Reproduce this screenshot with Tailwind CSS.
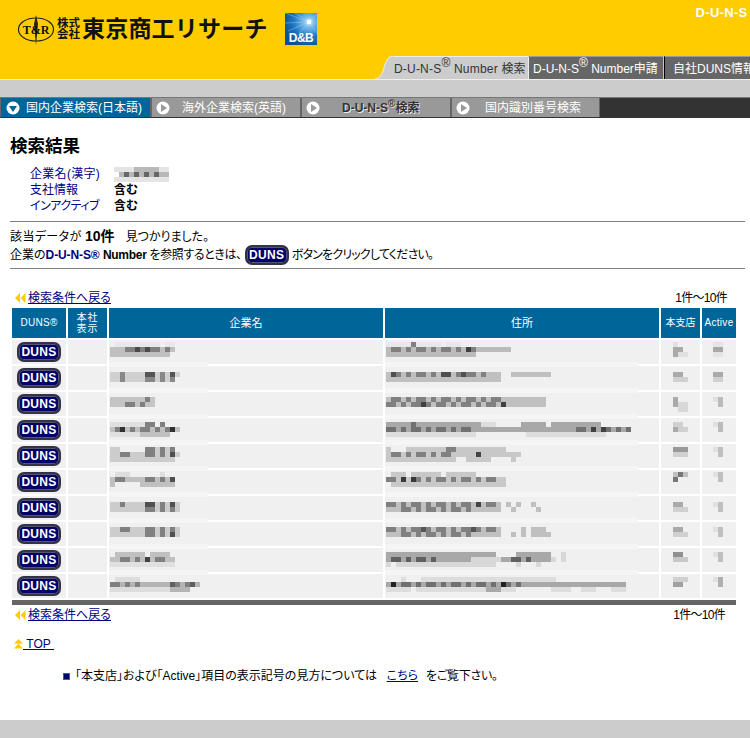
<!DOCTYPE html>
<html lang="ja">
<head>
<meta charset="utf-8">
<title>検索結果</title>
<script src="https://cdn.jsdelivr.net/npm/@tailwindcss/browser@4"></script>
</head>
<body class="bg-white">
<div class="relative w-[750px] h-[738px] overflow-hidden flex flex-col text-[12px] leading-[16px] text-black [font-feature-settings:'palt'] font-['Liberation_Sans','Noto_Sans_CJK_JP',sans-serif]">

  <!-- header -->
  <header class="h-[80px] shrink-0 bg-[#ffcc00] border-b border-[#eeeeee] flex flex-col justify-between overflow-hidden">
    <div class="flex items-start pl-[17px] pt-[13px] h-[56px] whitespace-nowrap">
      <svg width="38" height="30" viewBox="0 0 38 30" class="mt-[2px] shrink-0" fill="none">
        <path d="M19 0 L21 9 L19 30 L17 9Z" fill="#222"/>
        <ellipse cx="19" cy="14.500" rx="17.500" ry="11.500" stroke="#222" stroke-width="1.200"/>
        <text x="19" y="19" text-anchor="middle" font-family="Liberation Serif" font-weight="700" font-size="12" fill="#111">T&amp;R</text>
      </svg>
      <div class="ml-[2px] mt-[5px] w-[24px] font-bold text-[11.500px] leading-[10.500px] text-[#111]">株式<br>会社</div>
      <div class="ml-[1px] mt-[2px] font-bold text-[23px] leading-[28px] tracking-[0.200px] text-[#111] [font-feature-settings:normal]">東京商工リサーチ</div>
      <svg width="32" height="32" viewBox="0 0 32 32" class="ml-[17px] shrink-0">
        <defs><radialGradient id="db" cx="0.750" cy="0.280" r="0.800"><stop offset="0" stop-color="#ffffff"/><stop offset="0.180" stop-color="#7fc0ee"/><stop offset="0.600" stop-color="#1f78c4"/><stop offset="1" stop-color="#0a4f96"/></radialGradient></defs>
        <rect width="32" height="32" fill="url(#db)"/>
        <g stroke="#a8d8f6" stroke-width="0.600" opacity="0.700"><path d="M24 9L0 0M24 9L10 0M24 9L32 1M24 9L0 10M24 9L3 18M24 9L32 20M24 9L14 20"/></g>
        <rect x="22" y="7" width="4" height="4" fill="#fff"/>
        <text x="16" y="29" text-anchor="middle" font-family="Liberation Sans" font-weight="700" font-size="12" letter-spacing="-0.500" fill="#fff">D&amp;B</text>
      </svg>
      <div class="ml-[379px] mt-[-8px] font-bold text-[13px] text-white tracking-[0.300px]">D-U-N-S</div>
    </div>
    <div class="h-[23px] flex pl-[375px] whitespace-nowrap">
      <svg width="19" height="23" viewBox="0 0 19 23" class="shrink-0"><path d="M0 23C9 22 8 10 12 4C14 1 16 0 19 0V23Z" fill="#cccccc"/><path d="M0 23C9 22 8 10 12 4C14 1 16 0 19 0" fill="none" stroke="#eeeeee"/></svg>
      <div class="w-[134px] shrink-0 bg-[#cccccc] border-t border-[#eeeeee] text-[#333333] flex items-center pt-[2px] tracking-[0.200px]">D-U-N-S<sup class="text-[12px] leading-[0px]">®</sup>&nbsp;Number 検索</div>
      <div class="w-[135px] shrink-0 bg-[#666666] border-t border-[#999999] border-l border-l-[#eeeeee] text-white flex items-center pl-[4px] pt-[2px]">D-U-N-S<sup class="text-[12px] leading-[0px]">®</sup>&nbsp;Number申請</div>
      <div class="flex-1 ml-[1px] bg-[#666666] border-t border-[#999999] border-l border-l-black text-white flex items-center pl-[8px] pt-[2px]">自社DUNS情報</div>
    </div>
  </header>

  <div class="h-[17px] shrink-0 bg-[#cccccc]"></div>

  <!-- nav -->
  <nav class="h-[21px] shrink-0 bg-[#333333] border-t border-[#777777] flex whitespace-nowrap text-white">
    <div class="w-[150px] h-[19px] bg-[#006699] border-l border-[#666666] flex items-center pl-[5px]">
      <svg width="14" height="14" viewBox="0 0 14 14"><circle cx="7" cy="7" r="6.500" fill="#fff"/><path d="M3 5H11L7 11Z" fill="#006699"/></svg>
      <span class="ml-[6px]">国内企業検索(日本語)</span>
    </div>
    <div class="w-[150px] h-[19px] bg-[#999999] border-l-2 border-[#666666] flex items-center pl-[4px]">
      <svg width="14" height="14" viewBox="0 0 14 14"><circle cx="7" cy="7" r="6.500" fill="#fff"/><path d="M5 3V11L11 7Z" fill="#999999"/></svg>
      <span class="ml-[12px]">海外企業検索(英語)</span>
    </div>
    <div class="w-[150px] h-[19px] bg-[#999999] border-l-2 border-[#666666] flex items-center pl-[4px]">
      <svg width="14" height="14" viewBox="0 0 14 14"><circle cx="7" cy="7" r="6.500" fill="#fff"/><path d="M5 3V11L11 7Z" fill="#999999"/></svg>
      <span class="ml-[22px] font-bold text-[#333333] [text-shadow:1px_1px_0_#e8e8e8]">D-U-N-S<sup class="text-[10px] leading-[0px]">®</sup>検索</span>
    </div>
    <div class="w-[150px] h-[19px] bg-[#999999] border-l-2 border-r border-[#666666] flex items-center pl-[4px]">
      <svg width="14" height="14" viewBox="0 0 14 14"><circle cx="7" cy="7" r="6.500" fill="#fff"/><path d="M5 3V11L11 7Z" fill="#999999"/></svg>
      <span class="ml-[15px]">国内識別番号検索</span>
    </div>
  </nav>

  <main class="flex-1 flex flex-col">
    <h1 class="ml-[10px] mt-[18px] text-[17.500px] leading-[20px] font-bold">検索結果</h1>

    <dl class="ml-[30px] mt-[10px] grid grid-cols-[84px_1fr] auto-rows-[16px]">
      <dt class="text-[#000080] tracking-[0.300px]">企業名(漢字)</dt>
      <dd class="flex items-center">
        <svg width="55" height="15" fill="none" stroke-width="5"><path stroke="#e4e4e4" d="M0 2.500h55M0 12.500h55"/><path stroke="#b8b8b8" d="M5 7.500h50M20 2.500h25"/><path stroke="#666666" stroke-dasharray="5 5" d="M10 7.500h35"/></svg>
      </dd>
      <dt class="text-[#000080]">支社情報</dt><dd class="font-bold">含む</dd>
      <dt class="text-[#000080] tracking-[-0.500px]">インアクティブ</dt><dd class="font-bold">含む</dd>
    </dl>

    <hr class="ml-[10px] mr-[5px] mt-[7px] border-t border-[#808080]">
    <p class="ml-[10px] mt-[6px] whitespace-nowrap"><span class="tracking-[0.400px]">該当データが</span> <b class="text-[14px]">10件</b><span class="ml-[11px]">見つかりました。</span></p>
    <p class="ml-[10px] flex items-center h-[20px] whitespace-nowrap">企業の<b class="text-[#000080] tracking-[-0.100px]">D-U-N-S®</b>&nbsp;<b class="tracking-[-0.300px]">Number</b><span class="ml-[3px] tracking-[-0.400px]">を参照するときは、</span><span class="mx-[3px] w-[44px] h-[20px] rounded-[7px] bg-[#000066] border-2 border-[#333344] shadow-[inset_0_0_0_1px_#555577] text-white font-bold text-[12px] leading-[16px] tracking-[0.300px] text-center">DUNS</span><span class="tracking-[-0.800px]">ボタンをクリックしてください。</span></p>
    <hr class="ml-[10px] mr-[5px] mt-[3px] border-t border-[#808080]">

    <div class="mt-[21px] ml-[15px] mr-[23px] flex items-center justify-between h-[16px]">
      <a class="flex items-center text-[#000080] underline" href="#"><svg width="11" height="10" viewBox="0 0 11 10" class="mr-[2px]"><path d="M5 0V10L0 5ZM10.500 0V10L5.500 5Z" fill="#ffcc00"/></svg>検索条件へ戻る</a>
      <span class="whitespace-nowrap tracking-[-0.700px]">1件～10件</span>
    </div>

    <!-- table -->
    <div class="mt-[2px] ml-[12px] w-[724px] grid grid-cols-[54px_39px_274px_274px_39px_34px] grid-rows-[30px_repeat(10,24px)] gap-[2px]">
      <div class="bg-[#006699] text-white text-[10px] flex items-center justify-center tracking-[0.300px]">DUNS®</div>
      <div class="bg-[#006699] text-white text-[10px] leading-[11px] flex items-center justify-center text-center tracking-[1px]">本社<br>表示</div>
      <div class="bg-[#006699] text-white text-[11px] flex items-center justify-center">企業名</div>
      <div class="bg-[#006699] text-white text-[11px] flex items-center justify-center">住所</div>
      <div class="bg-[#006699] text-white text-[10px] flex items-center justify-center">本支店</div>
      <div class="bg-[#006699] text-white text-[10px] flex items-center justify-center tracking-[0.300px]">Active</div>

      <!-- row 1 -->
      <div class="bg-[#f0f0f0] flex items-center justify-center"><span class="w-[44px] h-[20px] rounded-[7px] bg-[#000066] border-2 border-[#333344] shadow-[inset_0_0_0_1px_#555577] text-white font-bold leading-[16px] tracking-[0.300px] text-center">DUNS</span></div><div class="bg-[#f0f0f0]"></div>
      <div class="bg-[#f0f0f0] pl-[1px] pt-[2px]"><svg class="block overflow-visible" width="65" height="15" fill="none" stroke-width="5"><path stroke="#e8e8e8" d="M5 2.500h45M55 2.500h10"/><path stroke="#c0c0c0" d="M0 7.500h65M0 12.500h60"/><path stroke="#808080" stroke-dasharray="10 5 5 5" d="M15 7.500h45"/><path stroke="#4a4a4a" d="M25 7.500h5M35 7.500h5"/></svg></div>
      <div class="bg-[#f0f0f0] pl-[1px] pt-[2px]"><svg class="block overflow-visible" width="125" height="15" fill="none" stroke-width="5"><path stroke="#e8e8e8" d="M0 2.500h55M60 2.500h15"/><path stroke="#bbbbbb" d="M0 7.500h125M0 12.500h90"/><path stroke="#808080" stroke-dasharray="10 5 5 5" d="M5 7.500h90M25 2.500h5"/><path stroke="#404040" d="M80 7.500h5"/></svg></div>
      <div class="bg-[#f0f0f0] pl-[12px] pt-[2px]"><svg class="block overflow-visible" width="15" height="15" fill="none" stroke-width="5"><path stroke="#e0e0e0" d="M0 2.500h5M0 12.500h15"/><path stroke="#aaaaaa" d="M0 7.500h10M0 12.500h5"/></svg></div>
      <div class="bg-[#f0f0f0] pl-[11px] pt-[2px]"><svg class="block overflow-visible" width="10" height="15" fill="none" stroke-width="5"><path stroke="#e4e4e4" d="M0 2.500h10M0 12.500h10"/><path stroke="#a8a8a8" d="M0 7.500h10"/></svg></div>

      <!-- row 2 -->
      <div class="bg-[#f0f0f0] flex items-center justify-center"><span class="w-[44px] h-[20px] rounded-[7px] bg-[#000066] border-2 border-[#333344] shadow-[inset_0_0_0_1px_#555577] text-white font-bold leading-[16px] tracking-[0.300px] text-center">DUNS</span></div><div class="bg-[#f0f0f0]"></div>
      <div class="bg-[#f0f0f0] pl-[1px] pt-[6px]"><svg class="block overflow-visible" width="70" height="10" fill="none" stroke-width="5"><path stroke="#f5f5f5" d="M-1 -7.500h99"/><path stroke="#d0d0d0" d="M0 2.500h70M0 7.500h65"/><path stroke="#888888" stroke-dasharray="10 5 5 5" d="M10 2.500h5M35 2.500h30M10 7.500h5M35 7.500h30"/><path stroke="#555555" d="M35 2.500h10M60 2.500h5"/></svg></div>
      <div class="bg-[#f0f0f0] pl-[1px] pt-[6px]"><svg class="block overflow-visible" width="165" height="10" fill="none" stroke-width="5"><path stroke="#f5f5f5" d="M-1 -7.500h253"/><path stroke="#c0c0c0" d="M0 2.500h115M125 2.500h40M0 7.500h115"/><path stroke="#808080" stroke-dasharray="10 5 5 5" d="M5 2.500h100"/><path stroke="#505050" d="M5 2.500h5M55 2.500h10M75 2.500h5"/></svg></div>
      <div class="bg-[#f0f0f0] pl-[12px] pt-[6px]"><svg class="block overflow-visible" width="15" height="10" fill="none" stroke-width="5"><path stroke="#d0d0d0" d="M0 7.500h15"/><path stroke="#aaaaaa" d="M0 2.500h10"/></svg></div>
      <div class="bg-[#f0f0f0] pl-[11px] pt-[6px]"><svg class="block overflow-visible" width="10" height="10" fill="none" stroke-width="5"><path stroke="#d0d0d0" d="M0 7.500h10"/><path stroke="#aaaaaa" d="M0 2.500h10"/></svg></div>

      <!-- row 3 -->
      <div class="bg-[#f0f0f0] flex items-center justify-center"><span class="w-[44px] h-[20px] rounded-[7px] bg-[#000066] border-2 border-[#333344] shadow-[inset_0_0_0_1px_#555577] text-white font-bold leading-[16px] tracking-[0.300px] text-center">DUNS</span></div><div class="bg-[#f0f0f0]"></div>
      <div class="bg-[#f0f0f0] pl-[1px] pt-[5px]"><svg class="block overflow-visible" width="45" height="10" fill="none" stroke-width="5"><path stroke="#f5f5f5" d="M-1 -6.500h99"/><path stroke="#c4c4c4" d="M0 2.500h45M0 7.500h45"/><path stroke="#808080" stroke-dasharray="10 5 5 5" d="M15 7.500h25M35 2.500h5"/></svg></div>
      <div class="bg-[#f0f0f0] pl-[1px] pt-[5px]"><svg class="block overflow-visible" width="160" height="10" fill="none" stroke-width="5"><path stroke="#f5f5f5" d="M-1 -6.500h253"/><path stroke="#c0c0c0" d="M0 2.500h160M0 7.500h160"/><path stroke="#808080" stroke-dasharray="10 5 5 5" d="M5 2.500h110M0 7.500h115"/><path stroke="#404040" d="M35 7.500h5M115 7.500h5"/></svg></div>
      <div class="bg-[#f0f0f0] pl-[12px] pt-[5px]"><svg class="block overflow-visible" width="15" height="15" fill="none" stroke-width="5"><path stroke="#d8d8d8" d="M5 7.500h10M5 12.500h10"/><path stroke="#aaaaaa" d="M0 2.500h5M0 7.500h5"/></svg></div>
      <div class="bg-[#f0f0f0] pl-[11px] pt-[5px]"><svg class="block overflow-visible" width="10" height="10" fill="none" stroke-width="5"><path stroke="#e0e0e0" d="M0 2.500h5"/><path stroke="#bbbbbb" d="M5 2.500h5M5 7.500h5"/></svg></div>

      <!-- row 4 -->
      <div class="bg-[#f0f0f0] flex items-center justify-center"><span class="w-[44px] h-[20px] rounded-[7px] bg-[#000066] border-2 border-[#333344] shadow-[inset_0_0_0_1px_#555577] text-white font-bold leading-[16px] tracking-[0.300px] text-center">DUNS</span></div><div class="bg-[#f0f0f0]"></div>
      <div class="bg-[#f0f0f0] pl-[1px] pt-[4px]"><svg class="block overflow-visible" width="70" height="15" fill="none" stroke-width="5"><path stroke="#f5f5f5" d="M-1 -5.500h99"/><path stroke="#e0e0e0" d="M0 2.500h35M0 12.500h60"/><path stroke="#c0c0c0" d="M0 7.500h70M30 12.500h30"/><path stroke="#808080" stroke-dasharray="10 5 5 5" d="M5 7.500h60M35 2.500h20"/><path stroke="#303030" d="M10 7.500h5M60 7.500h5"/></svg></div>
      <div class="bg-[#f0f0f0] pl-[1px] pt-[4px]"><svg class="block overflow-visible" width="245" height="15" fill="none" stroke-width="5"><path stroke="#f5f5f5" d="M-1 -5.500h253"/><path stroke="#dddddd" d="M0 2.500h110M0 12.500h90M140 12.500h80M110 7.500h135"/><path stroke="#a8a8a8" d="M0 2.500h95M0 7.500h245M135 2.500h25M165 2.500h50"/><path stroke="#707070" stroke-dasharray="10 5 5 5" d="M0 7.500h90M190 7.500h55M25 2.500h5"/><path stroke="#404040" d="M205 7.500h5M215 7.500h5"/></svg></div>
      <div class="bg-[#f0f0f0] pl-[12px] pt-[4px]"><svg class="block overflow-visible" width="15" height="10" fill="none" stroke-width="5"><path stroke="#d0d0d0" d="M0 2.500h10M0 7.500h15"/><path stroke="#aaaaaa" d="M0 7.500h5"/></svg></div>
      <div class="bg-[#f0f0f0] pl-[11px] pt-[4px]"><svg class="block overflow-visible" width="10" height="10" fill="none" stroke-width="5"><path stroke="#e0e0e0" d="M0 2.500h5"/><path stroke="#bbbbbb" d="M5 2.500h5M5 7.500h5"/></svg></div>

      <!-- row 5 -->
      <div class="bg-[#f0f0f0] flex items-center justify-center"><span class="w-[44px] h-[20px] rounded-[7px] bg-[#000066] border-2 border-[#333344] shadow-[inset_0_0_0_1px_#555577] text-white font-bold leading-[16px] tracking-[0.300px] text-center">DUNS</span></div><div class="bg-[#f0f0f0]"></div>
      <div class="bg-[#f0f0f0] pl-[1px] pt-[3px]"><svg class="block overflow-visible" width="70" height="15" fill="none" stroke-width="5"><path stroke="#f5f5f5" d="M-1 -4.500h99"/><path stroke="#cccccc" d="M0 2.500h10M35 2.500h30M0 7.500h70M0 12.500h65"/><path stroke="#808080" stroke-dasharray="10 5 5 5" d="M10 7.500h10M35 7.500h30M35 2.500h30"/><path stroke="#505050" d="M60 7.500h5"/></svg></div>
      <div class="bg-[#f0f0f0] pl-[1px] pt-[3px]"><svg class="block overflow-visible" width="135" height="15" fill="none" stroke-width="5"><path stroke="#f5f5f5" d="M-1 -4.500h253"/><path stroke="#c8c8c8" d="M0 2.500h5M20 2.500h100M0 7.500h135M0 12.500h70M80 12.500h25M125 12.500h5"/><path stroke="#808080" stroke-dasharray="10 5 5 5" d="M5 7.500h60M60 2.500h15"/><path stroke="#444444" d="M90 7.500h5"/></svg></div>
      <div class="bg-[#f0f0f0] pl-[12px] pt-[3px]"><svg class="block overflow-visible" width="15" height="10" fill="none" stroke-width="5"><path stroke="#d0d0d0" d="M0 7.500h15"/><path stroke="#9a9a9a" d="M0 2.500h15"/></svg></div>
      <div class="bg-[#f0f0f0] pl-[11px] pt-[3px]"><svg class="block overflow-visible" width="10" height="10" fill="none" stroke-width="5"><path stroke="#e0e0e0" d="M0 2.500h5"/><path stroke="#c0c0c0" d="M5 2.500h5M5 7.500h5"/></svg></div>

      <!-- row 6 -->
      <div class="bg-[#f0f0f0] flex items-center justify-center"><span class="w-[44px] h-[20px] rounded-[7px] bg-[#000066] border-2 border-[#333344] shadow-[inset_0_0_0_1px_#555577] text-white font-bold leading-[16px] tracking-[0.300px] text-center">DUNS</span></div><div class="bg-[#f0f0f0]"></div>
      <div class="bg-[#f0f0f0] pl-[1px] pt-[2px]"><svg class="block overflow-visible" width="70" height="15" fill="none" stroke-width="5"><path stroke="#f5f5f5" d="M-1 -3.500h99"/><path stroke="#dddddd" d="M5 2.500h15M50 2.500h5"/><path stroke="#c0c0c0" d="M0 7.500h65M0 12.500h5M30 12.500h35"/><path stroke="#808080" stroke-dasharray="10 5 5 5" d="M5 7.500h15M35 7.500h25"/><path stroke="#505050" d="M60 7.500h5"/></svg></div>
      <div class="bg-[#f0f0f0] pl-[1px] pt-[2px]"><svg class="block overflow-visible" width="120" height="15" fill="none" stroke-width="5"><path stroke="#f5f5f5" d="M-1 -3.500h253"/><path stroke="#c8c8c8" d="M5 2.500h15M25 2.500h30M60 2.500h30M0 7.500h120M5 12.500h115"/><path stroke="#808080" stroke-dasharray="10 5 5 5" d="M0 7.500h115"/><path stroke="#3a3a3a" d="M15 7.500h5M25 7.500h5"/></svg></div>
      <div class="bg-[#f0f0f0] pl-[12px] pt-[2px]"><svg class="block overflow-visible" width="15" height="10" fill="none" stroke-width="5"><path stroke="#c0c0c0" d="M0 2.500h15"/><path stroke="#777777" d="M5 2.500h5M0 7.500h5"/></svg></div>
      <div class="bg-[#f0f0f0] pl-[11px] pt-[2px]"><svg class="block overflow-visible" width="10" height="10" fill="none" stroke-width="5"><path stroke="#e0e0e0" d="M0 2.500h5"/><path stroke="#c0c0c0" d="M5 2.500h5M5 7.500h5"/></svg></div>

      <!-- row 7 -->
      <div class="bg-[#f0f0f0] flex items-center justify-center"><span class="w-[44px] h-[20px] rounded-[7px] bg-[#000066] border-2 border-[#333344] shadow-[inset_0_0_0_1px_#555577] text-white font-bold leading-[16px] tracking-[0.300px] text-center">DUNS</span></div><div class="bg-[#f0f0f0]"></div>
      <div class="bg-[#f0f0f0] pl-[1px] pt-[6px]"><svg class="block overflow-visible" width="70" height="10" fill="none" stroke-width="5"><path stroke="#f5f5f5" d="M-1 -7.500h99"/><path stroke="#cccccc" d="M0 2.500h70M0 7.500h70"/><path stroke="#808080" stroke-dasharray="10 5 5 5" d="M10 2.500h5M35 2.500h30M35 7.500h30"/><path stroke="#505050" d="M35 2.500h10M60 2.500h5"/></svg></div>
      <div class="bg-[#f0f0f0] pl-[1px] pt-[6px]"><svg class="block overflow-visible" width="155" height="10" fill="none" stroke-width="5"><path stroke="#f5f5f5" d="M-1 -7.500h253"/><path stroke="#c0c0c0" d="M0 2.500h115M120 2.500h5M130 2.500h5M145 2.500h5M0 7.500h115M125 7.500h5M150 7.500h5"/><path stroke="#808080" stroke-dasharray="10 5 5 5" d="M0 2.500h115M15 7.500h70"/><path stroke="#444444" d="M90 2.500h5"/></svg></div>
      <div class="bg-[#f0f0f0] pl-[12px] pt-[6px]"><svg class="block overflow-visible" width="15" height="10" fill="none" stroke-width="5"><path stroke="#d0d0d0" d="M0 7.500h15"/><path stroke="#aaaaaa" d="M0 2.500h10"/></svg></div>
      <div class="bg-[#f0f0f0] pl-[11px] pt-[6px]"><svg class="block overflow-visible" width="10" height="10" fill="none" stroke-width="5"><path stroke="#e0e0e0" d="M0 2.500h5"/><path stroke="#c0c0c0" d="M5 2.500h5M5 7.500h5"/></svg></div>

      <!-- row 8 -->
      <div class="bg-[#f0f0f0] flex items-center justify-center"><span class="w-[44px] h-[20px] rounded-[7px] bg-[#000066] border-2 border-[#333344] shadow-[inset_0_0_0_1px_#555577] text-white font-bold leading-[16px] tracking-[0.300px] text-center">DUNS</span></div><div class="bg-[#f0f0f0]"></div>
      <div class="bg-[#f0f0f0] pl-[1px] pt-[5px]"><svg class="block overflow-visible" width="70" height="10" fill="none" stroke-width="5"><path stroke="#f5f5f5" d="M-1 -6.500h99"/><path stroke="#cccccc" d="M0 2.500h70M0 7.500h70"/><path stroke="#808080" stroke-dasharray="10 5 5 5" d="M10 2.500h10M35 2.500h30M35 7.500h30"/><path stroke="#505050" d="M60 7.500h5"/></svg></div>
      <div class="bg-[#f0f0f0] pl-[1px] pt-[5px]"><svg class="block overflow-visible" width="165" height="10" fill="none" stroke-width="5"><path stroke="#f5f5f5" d="M-1 -6.500h253"/><path stroke="#c0c0c0" d="M0 2.500h115M125 7.500h5M135 2.500h5M145 2.500h15M0 7.500h115M135 7.500h5M145 7.500h20"/><path stroke="#808080" stroke-dasharray="10 5 5 5" d="M0 2.500h115M15 7.500h70"/><path stroke="#555555" d="M35 2.500h5M85 2.500h5"/></svg></div>
      <div class="bg-[#f0f0f0] pl-[12px] pt-[5px]"><svg class="block overflow-visible" width="15" height="10" fill="none" stroke-width="5"><path stroke="#d0d0d0" d="M0 7.500h15"/><path stroke="#aaaaaa" d="M0 2.500h10"/></svg></div>
      <div class="bg-[#f0f0f0] pl-[11px] pt-[5px]"><svg class="block overflow-visible" width="10" height="10" fill="none" stroke-width="5"><path stroke="#e0e0e0" d="M0 2.500h5"/><path stroke="#c0c0c0" d="M5 2.500h5M5 7.500h5"/></svg></div>

      <!-- row 9 -->
      <div class="bg-[#f0f0f0] flex items-center justify-center"><span class="w-[44px] h-[20px] rounded-[7px] bg-[#000066] border-2 border-[#333344] shadow-[inset_0_0_0_1px_#555577] text-white font-bold leading-[16px] tracking-[0.300px] text-center">DUNS</span></div><div class="bg-[#f0f0f0]"></div>
      <div class="bg-[#f0f0f0] pl-[1px] pt-[4px]"><svg class="block overflow-visible" width="65" height="15" fill="none" stroke-width="5"><path stroke="#f5f5f5" d="M-1 -5.500h99"/><path stroke="#e0e0e0" d="M0 12.500h65"/><path stroke="#c0c0c0" d="M5 2.500h30M40 2.500h20M0 7.500h65"/><path stroke="#808080" stroke-dasharray="10 5 5 5" d="M10 7.500h25M45 7.500h15"/><path stroke="#404040" d="M35 7.500h5"/></svg></div>
      <div class="bg-[#f0f0f0] pl-[1px] pt-[4px]"><svg class="block overflow-visible" width="180" height="15" fill="none" stroke-width="5"><path stroke="#f5f5f5" d="M-1 -5.500h253"/><path stroke="#d8d8d8" d="M0 12.500h5M10 12.500h100M130 12.500h5M150 12.500h5M0 7.500h170M175 7.500h5M175 2.500h5"/><path stroke="#a8a8a8" d="M0 2.500h110M130 2.500h35M0 7.500h85M115 7.500h50"/><path stroke="#606060" stroke-dasharray="10 5 5 5" d="M5 7.500h50M125 7.500h25"/></svg></div>
      <div class="bg-[#f0f0f0] pl-[12px] pt-[4px]"><svg class="block overflow-visible" width="15" height="10" fill="none" stroke-width="5"><path stroke="#c8c8c8" d="M0 7.500h15"/><path stroke="#909090" d="M0 2.500h10"/></svg></div>
      <div class="bg-[#f0f0f0] pl-[11px] pt-[4px]"><svg class="block overflow-visible" width="10" height="10" fill="none" stroke-width="5"><path stroke="#e0e0e0" d="M0 2.500h5"/><path stroke="#c0c0c0" d="M5 2.500h5M5 7.500h5"/></svg></div>

      <!-- row 10 -->
      <div class="bg-[#f0f0f0] flex items-center justify-center"><span class="w-[44px] h-[20px] rounded-[7px] bg-[#000066] border-2 border-[#333344] shadow-[inset_0_0_0_1px_#555577] text-white font-bold leading-[16px] tracking-[0.300px] text-center">DUNS</span></div><div class="bg-[#f0f0f0]"></div>
      <div class="bg-[#f0f0f0] pl-[1px] pt-[3px]"><svg class="block overflow-visible" width="90" height="15" fill="none" stroke-width="5"><path stroke="#f5f5f5" d="M-1 -4.500h99"/><path stroke="#dddddd" d="M5 2.500h25M0 12.500h80"/><path stroke="#b4b4b4" d="M0 7.500h90M60 12.500h20"/><path stroke="#808080" stroke-dasharray="10 5 5 5" d="M0 7.500h30M60 7.500h20"/><path stroke="#606060" d="M60 7.500h5M80 7.500h5"/></svg></div>
      <div class="bg-[#f0f0f0] pl-[1px] pt-[3px]"><svg class="block overflow-visible" width="240" height="15" fill="none" stroke-width="5"><path stroke="#f5f5f5" d="M-1 -4.500h253"/><path stroke="#dddddd" d="M0 12.500h25M30 12.500h100M165 12.500h20M195 12.500h15M225 12.500h15M15 2.500h5M35 2.500h135"/><path stroke="#a8a8a8" d="M0 7.500h240M100 12.500h15"/><path stroke="#707070" stroke-dasharray="10 5 5 5" d="M15 7.500h125"/><path stroke="#222222" d="M5 7.500h5M115 7.500h5"/></svg></div>
      <div class="bg-[#f0f0f0] pl-[12px] pt-[3px]"><svg class="block overflow-visible" width="15" height="10" fill="none" stroke-width="5"><path stroke="#d0d0d0" d="M0 2.500h15"/><path stroke="#a0a0a0" d="M0 7.500h10"/></svg></div>
      <div class="bg-[#f0f0f0] pl-[11px] pt-[3px]"><svg class="block overflow-visible" width="10" height="10" fill="none" stroke-width="5"><path stroke="#e0e0e0" d="M0 2.500h5"/><path stroke="#b0b0b0" d="M5 2.500h5M5 7.500h5"/></svg></div>
    </div>

    <div class="mt-[2px] ml-[12px] w-[724px] h-[5px] bg-[#666666]"></div>

    <div class="mt-[2px] ml-[15px] mr-[25px] flex items-center justify-between h-[16px]">
      <a class="flex items-center text-[#000080] underline" href="#"><svg width="11" height="10" viewBox="0 0 11 10" class="mr-[2px]"><path d="M5 0V10L0 5ZM10.500 0V10L5.500 5Z" fill="#ffcc00"/></svg>検索条件へ戻る</a>
      <span class="whitespace-nowrap tracking-[-0.700px]">1件～10件</span>
    </div>

    <a class="mt-[13px] ml-[14px] flex items-center h-[16px] text-[#000080] underline" href="#"><svg width="9" height="10" viewBox="0 0 9 10"><path d="M4.500 0L9 4.500H0ZM4.500 4.500L9 9.500H0Z" fill="#ffcc00"/></svg>&nbsp;TOP&nbsp;</a>

    <p class="mt-[16px] ml-[63px] flex items-center h-[16px] whitespace-nowrap"><span class="w-[7px] h-[7px] bg-[#000066] border border-[#336699] mr-[5px]"></span>「本支店」および「Active」項目の表示記号の見方については&nbsp;&nbsp;<a class="ml-[3px] text-[#000080] underline" href="#">こちら</a><span class="ml-[8px] tracking-[-0.300px]">をご覧下さい。</span></p>
  </main>

  <footer class="h-[18px] shrink-0 bg-[#cccccc]"></footer>
</div>
</body>
</html>
